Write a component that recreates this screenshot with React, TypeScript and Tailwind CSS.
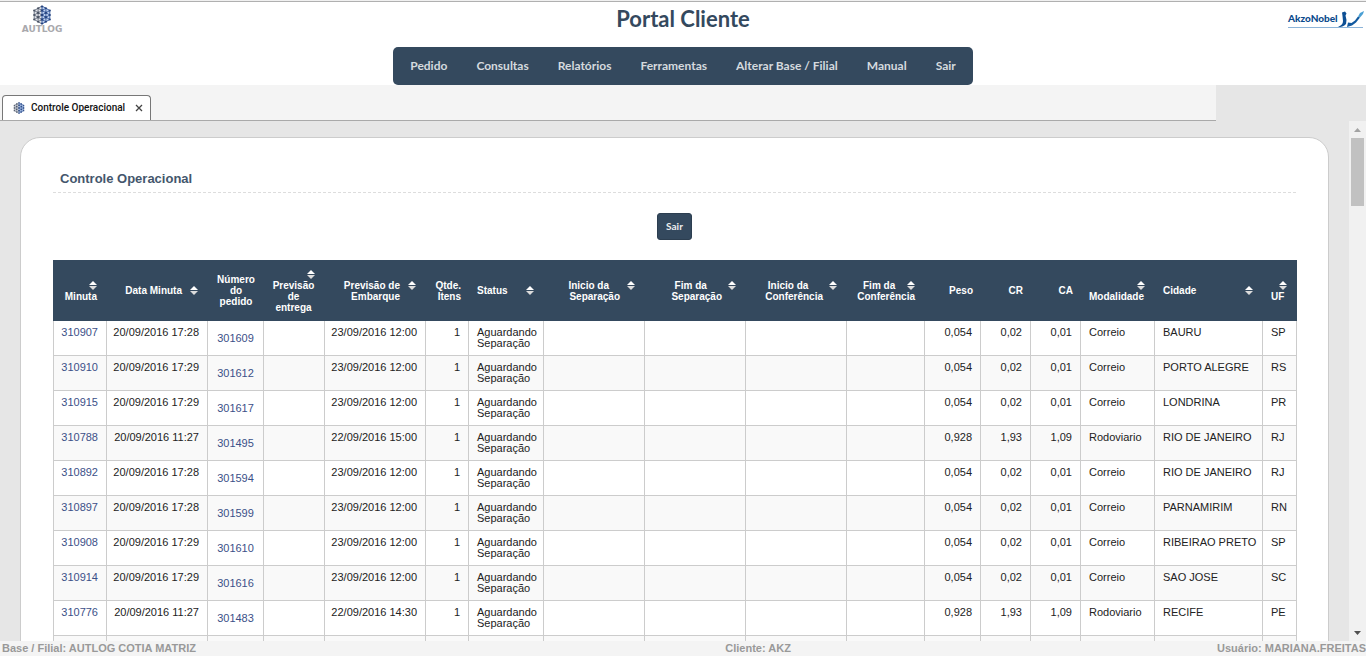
import type { ReactNode } from "react";

type Row = {
  minuta: string;
  data: string;
  pedido: string;
  embarque: string;
  peso: string;
  cr: string;
  ca: string;
  modalidade: string;
  cidade: string;
  uf: string;
};

const light = { peso: "0,054", cr: "0,02", ca: "0,01", modalidade: "Correio" };
const heavy = { peso: "0,928", cr: "1,93", ca: "1,09", modalidade: "Rodoviario" };

const rows: Row[] = [
  { minuta: "310907", data: "20/09/2016 17:28", pedido: "301609", embarque: "23/09/2016 12:00", ...light, cidade: "BAURU", uf: "SP" },
  { minuta: "310910", data: "20/09/2016 17:29", pedido: "301612", embarque: "23/09/2016 12:00", ...light, cidade: "PORTO ALEGRE", uf: "RS" },
  { minuta: "310915", data: "20/09/2016 17:29", pedido: "301617", embarque: "23/09/2016 12:00", ...light, cidade: "LONDRINA", uf: "PR" },
  { minuta: "310788", data: "20/09/2016 11:27", pedido: "301495", embarque: "22/09/2016 15:00", ...heavy, cidade: "RIO DE JANEIRO", uf: "RJ" },
  { minuta: "310892", data: "20/09/2016 17:28", pedido: "301594", embarque: "23/09/2016 12:00", ...light, cidade: "RIO DE JANEIRO", uf: "RJ" },
  { minuta: "310897", data: "20/09/2016 17:28", pedido: "301599", embarque: "23/09/2016 12:00", ...light, cidade: "PARNAMIRIM", uf: "RN" },
  { minuta: "310908", data: "20/09/2016 17:29", pedido: "301610", embarque: "23/09/2016 12:00", ...light, cidade: "RIBEIRAO PRETO", uf: "SP" },
  { minuta: "310914", data: "20/09/2016 17:29", pedido: "301616", embarque: "23/09/2016 12:00", ...light, cidade: "SAO JOSE", uf: "SC" },
  { minuta: "310776", data: "20/09/2016 11:27", pedido: "301483", embarque: "22/09/2016 14:30", ...heavy, cidade: "RECIFE", uf: "PE" },
];

const columnCount = 17;

const menu = ["Pedido", "Consultas", "Relatórios", "Ferramentas", "Alterar Base / Filial", "Manual", "Sair"];

function CubeMark({ className }: { className: string }) {
  return (
    <svg viewBox="0 0 20 20" className={className} aria-hidden="true">
      <path d="M10 1 2.200 5.500V14.500L10 19Z" fill="#e3e5ea" />
      <path d="M10 1 17.800 5.500V14.500L10 19Z" fill="#c3d3ee" />
      <g fill="none" stroke="#6f7889" strokeWidth="1">
        <path d="M10 1 2.200 5.500V14.500L10 19M10 5.500 2.200 10 10 14.500M6.100 3.250V16.750M2.200 5.500 10 10 2.200 14.500M6.100 3.250 10 5.500M6.100 16.750 10 14.500" />
      </g>
      <g fill="none" stroke="#3f64a6" strokeWidth="1">
        <path d="M10 1 17.800 5.500V14.500L10 19M10 5.500 17.800 10 10 14.500M13.900 3.250V16.750M17.800 5.500 10 10 17.800 14.500M13.900 3.250 10 5.500M13.900 16.750 10 14.500M10 1V19" />
      </g>
      <g fill="#4a5364">
        <circle cx="6.100" cy="3.250" r="1.100" />
        <circle cx="2.200" cy="5.500" r="1.100" />
        <circle cx="6.100" cy="7.750" r="1.200" />
        <circle cx="2.200" cy="10" r="1.100" />
        <circle cx="6.100" cy="12.250" r="1.200" />
        <circle cx="2.200" cy="14.500" r="1.100" />
        <circle cx="6.100" cy="16.750" r="1.100" />
      </g>
      <g fill="#28457f">
        <circle cx="10" cy="1.500" r="1.100" />
        <circle cx="10" cy="5.500" r="1.200" />
        <circle cx="10" cy="10" r="1.300" />
        <circle cx="10" cy="14.500" r="1.200" />
        <circle cx="10" cy="18.500" r="1.100" />
        <circle cx="13.900" cy="3.250" r="1.100" />
        <circle cx="17.800" cy="5.500" r="1.100" />
        <circle cx="13.900" cy="7.750" r="1.200" />
        <circle cx="17.800" cy="10" r="1.100" />
        <circle cx="13.900" cy="12.250" r="1.200" />
        <circle cx="17.800" cy="14.500" r="1.100" />
        <circle cx="13.900" cy="16.750" r="1.100" />
      </g>
    </svg>
  );
}

function Sort() {
  return (
    <button type="button" aria-label="Ordenar" className="flex h-[11px] w-2 shrink-0 items-center">
      <svg viewBox="0 0 8 9" className="h-[9px] w-2" aria-hidden="true">
        <path d="M4 0 8 4H0Z" fill="#fff" />
        <path d="M0 5H8L4 9Z" fill="#dcdcdc" />
      </svg>
    </button>
  );
}

function Th({ children, sortable = false }: { children: ReactNode; sortable?: boolean }) {
  return (
    <th scope="col" className={`h-[61px] pl-2 align-middle font-bold ${sortable ? "pr-2.5" : "pr-2"}`}>{children}</th>
  );
}

function Stacked({ children, className }: { children: ReactNode; className: string }) {
  return (
    <div className="flex flex-col items-end">
      <Sort />
      <span className={className}>{children}</span>
    </div>
  );
}

function TwoLine({ first, second }: { first: string; second: string }) {
  return (
    <div className="flex items-start justify-end gap-1.5">
      <span className="text-center">
        <span className="block pr-3">{first}</span>
        <span className="block">{second}</span>
      </span>
      <Sort />
    </div>
  );
}

function Td({ children, align = "left" }: { children?: ReactNode; align?: "left" | "right" | "center" }) {
  const styles = {
    left: "pl-2 pr-1 align-top text-left",
    right: "pl-1 pr-2 align-top text-right",
    center: "px-1 align-middle text-center",
  };
  return (
    <td className={`h-[35px] border-r border-b border-[#ccc] py-1.5 first:border-l ${styles[align]}`}>{children}</td>
  );
}

export default function App() {
  return (
    <div className="flex h-screen flex-col overflow-hidden bg-[#e6e6e6] font-['Liberation_Sans',Arial,sans-serif] text-[11px] leading-[11px] text-[#222]">
      <header className="grid shrink-0 grid-cols-[1fr_auto_1fr] border-t border-[#f0f0f0] bg-white">
        <div className="border-t border-[#b0b0b0] pt-[3px] pl-[18px]">
          <div className="flex w-12 flex-col items-center">
            <CubeMark className="size-5" />
            <span className="font-['DejaVu_Sans',sans-serif] text-[9px] leading-[9px] font-bold text-[#a9a9ad]">AUTLOG</span>
          </div>
        </div>
        <div className="flex flex-col items-center border-t border-[#b0b0b0]">
          <h1 className="mt-[5px] font-[Lato,sans-serif] text-[22px] leading-6 font-bold text-[#34495e]">Portal Cliente</h1>
          <nav className="mt-4 flex h-[38px] items-center gap-[29px] rounded-[5px] bg-[#34495e] px-[17px] font-[Lato,sans-serif] text-[12px] leading-4 font-bold text-[#d5dade]">
            {menu.map((item) => (
              <a key={item} href="#" className="whitespace-nowrap">{item}</a>
            ))}
          </nav>
        </div>
        <div className="border-t border-[#b0b0b0] pt-2 pr-[3px]">
          <div className="ml-auto flex w-[75px] items-end justify-between border-b border-[#8db4d8]">
            <span className="pb-[3px] font-[Lato,sans-serif] text-[10px] leading-3 font-black text-[#0b4a8c]">AkzoNobel</span>
            <svg viewBox="0 0 26 17" className="h-[17px] w-[26px] shrink-0" aria-hidden="true">
              <path d="M4 2.500 7 1.500 8.500 3.500 7.500 5.500 8.500 10 8 14C6 16.500 3 17 0 17 3.500 15.500 5 14 5 11L4.500 6Z" fill="#0d4f94" />
              <path d="M9 17 10 12.500 13.500 13 17 10.500 20 6.500 22 7.500 18 12.500 14 15.500Z" fill="#12599f" />
              <path d="M20 6.500 22 3 26 1 25 4 22 7.500Z" fill="#4ba0d4" />
            </svg>
          </div>
        </div>
      </header>

      <div className="flex h-9 w-[89%] shrink-0 items-end border-b border-[#a9a9a9] bg-[#f4f4f4] pl-0.5">
        <div className="flex h-[25px] items-center rounded-t border border-b-0 border-[#777] bg-white pr-[7px] pl-2.5">
          <CubeMark className="size-3" />
          <a href="#" className="ml-1.5 font-[Roboto,sans-serif] text-[10px] leading-3 font-medium text-[#111]">Controle Operacional</a>
          <button type="button" aria-label="Fechar" className="ml-2.5">
            <svg viewBox="0 0 8 8" className="size-2" aria-hidden="true">
              <path d="M1 1 7 7M7 1 1 7" stroke="#444" strokeWidth="1.300" fill="none" />
            </svg>
          </button>
        </div>
      </div>

      <div className="flex min-h-0 flex-1">
        <main className="min-w-0 flex-1 overflow-y-auto [scrollbar-width:none]">
          <section className="mx-5 mt-4 mb-5 rounded-[20px] border border-[#ccc] bg-white p-8">
            <h2 className="border-b border-dashed border-[#ddd] pb-1 pl-[7px] text-[13px] leading-[18px] font-bold text-[#44566c]">Controle Operacional</h2>
            <div className="flex justify-center py-5">
              <button type="button" className="h-[27px] rounded-[3px] border border-[#2c3e50] bg-[#34495e] px-2 font-[Lato,sans-serif] text-[10px] font-bold text-[#eee]">Sair</button>
            </div>
            <table className="w-full table-fixed border-separate border-spacing-0">
              <colgroup>
                <col className="w-[54px]" />
                <col className="w-[101px]" />
                <col className="w-[56px]" />
                <col className="w-[61px]" />
                <col className="w-[101px]" />
                <col className="w-[43px]" />
                <col className="w-[75px]" />
                <col className="w-[101px]" />
                <col className="w-[101px]" />
                <col className="w-[101px]" />
                <col className="w-[78px]" />
                <col className="w-[56px]" />
                <col className="w-[50px]" />
                <col className="w-[50px]" />
                <col className="w-[74px]" />
                <col className="w-[108px]" />
                <col className="w-[34px]" />
              </colgroup>
              <thead className="bg-[#34495e] text-[10px] text-white">
                <tr>
                  <Th sortable><Stacked className="text-right">Minuta</Stacked></Th>
                  <Th sortable><div className="flex justify-end gap-2 whitespace-nowrap">Data Minuta<Sort /></div></Th>
                  <Th>Número do pedido</Th>
                  <Th sortable><Stacked className="w-full text-center">Previsão de entrega</Stacked></Th>
                  <Th sortable>
                    <div className="flex justify-end gap-2 text-right">
                      <span>Previsão de<br />Embarque</span>
                      <Sort />
                    </div>
                  </Th>
                  <Th><div className="text-right">Qtde. Itens</div></Th>
                  <Th sortable><div className="flex justify-between">Status<Sort /></div></Th>
                  <Th sortable><TwoLine first="Inicio da" second="Separação" /></Th>
                  <Th sortable><TwoLine first="Fim da" second="Separação" /></Th>
                  <Th sortable><TwoLine first="Inicio da" second="Conferência" /></Th>
                  <Th sortable>
                    <div className="flex justify-between pl-2"><span>Fim da</span><Sort /></div>
                    <div className="text-right">Conferência</div>
                  </Th>
                  <Th><div className="text-right">Peso</div></Th>
                  <Th><div className="text-right">CR</div></Th>
                  <Th><div className="text-right">CA</div></Th>
                  <Th sortable><Stacked className="w-full text-left">Modalidade</Stacked></Th>
                  <Th sortable><div className="flex justify-between">Cidade<Sort /></div></Th>
                  <Th sortable><Stacked className="w-full text-left">UF</Stacked></Th>
                </tr>
              </thead>
              <tbody>
                {rows.map((r) => (
                  <tr key={r.minuta} className="whitespace-nowrap odd:bg-white even:bg-[#f9f9f9]">
                    <Td align="right"><a href="#" className="text-[#3b5088]">{r.minuta}</a></Td>
                    <Td align="right">{r.data}</Td>
                    <Td align="center"><a href="#" className="text-[#3b5088]">{r.pedido}</a></Td>
                    <Td />
                    <Td align="right">{r.embarque}</Td>
                    <Td align="right">1</Td>
                    <Td>Aguardando<br />Separação</Td>
                    <Td />
                    <Td />
                    <Td />
                    <Td />
                    <Td align="right">{r.peso}</Td>
                    <Td align="right">{r.cr}</Td>
                    <Td align="right">{r.ca}</Td>
                    <Td>{r.modalidade}</Td>
                    <Td>{r.cidade}</Td>
                    <Td>{r.uf}</Td>
                  </tr>
                ))}
                <tr className="bg-[#f9f9f9]">
                  {Array.from({ length: columnCount }, (_, i) => (
                    <Td key={i} />
                  ))}
                </tr>
              </tbody>
            </table>
          </section>
        </main>
        <div className="flex w-[17px] shrink-0 flex-col items-center bg-[#f1f1f1]">
          <button type="button" aria-label="Rolar para cima" className="flex h-[17px] w-full items-center justify-center">
            <svg viewBox="0 0 7 4" className="h-1 w-[7px]" aria-hidden="true"><path d="M3.500 0 7 4H0Z" fill="#a3a3a3" /></svg>
          </button>
          <div className="h-[68px] w-[13px] bg-[#c1c1c1]" />
          <button type="button" aria-label="Rolar para baixo" className="mt-auto flex h-[17px] w-full items-center justify-center">
            <svg viewBox="0 0 7 4" className="h-1 w-[7px]" aria-hidden="true"><path d="M0 0H7L3.500 4Z" fill="#505050" /></svg>
          </button>
        </div>
      </div>

      <footer className="grid h-[15px] shrink-0 grid-cols-[45%_21%_34%] bg-[#f4f4f4] pt-px text-[11px] leading-3 font-bold text-[#999]">
        <span className="pl-0.5">Base / Filial: AUTLOG COTIA MATRIZ</span>
        <span className="text-center">Cliente: AKZ</span>
        <span className="text-right">Usuário: MARIANA.FREITAS</span>
      </footer>
    </div>
  );
}
